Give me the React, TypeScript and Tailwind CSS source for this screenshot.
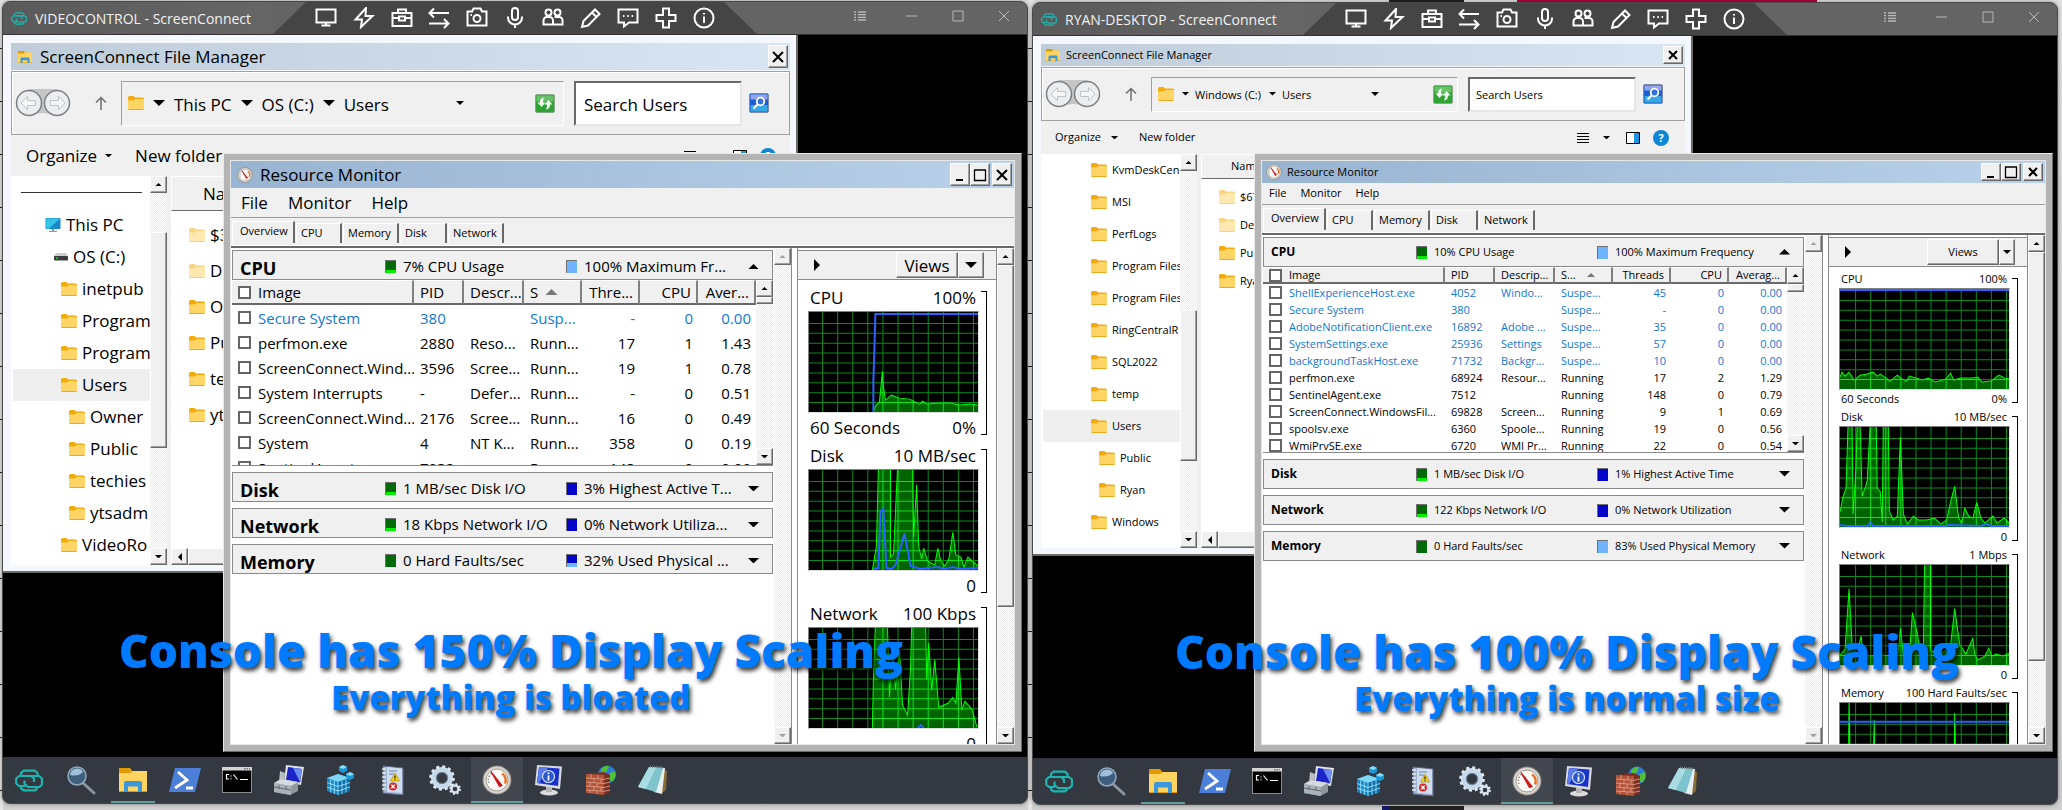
import React, { useId } from "react";

type Size = "lg" | "sm";
type Pt = [number, number];

/* ---------- small drawings ---------- */

function Logo({ className }: { className: string }) {
  return (
    <svg viewBox="0 0 28 22" className={className} fill="none" stroke="#1cb5b0" strokeWidth="2.200" strokeLinejoin="round">
      <path d="M6 6V3.500L8.500 1.200H20L22.500 3.500V6" />
      <path d="M9.500 6.500H24L27 9V15L24.500 17.500H13L9.500 14.500V11" />
      <path d="M19 12.500V9L16 6.500H4L1.200 9V14L4 16.500H10" />
      <path d="M6 16.500V19L8.500 20.900H20L22.500 18.500" />
    </svg>
  );
}

function Folder({ pale }: { pale?: boolean }) {
  return (
    <svg viewBox="0 0 16 14" className={pale ? "h-[14px] w-4 shrink-0 opacity-50" : "h-[14px] w-4 shrink-0"}>
      <path d="M0 1.500Q0 0 1.500 0H5.500L7 1.500H14.500Q16 1.500 16 3V6H0z" fill="#f2ab0c" />
      <path d="M0 4.500H5.500L7.500 3H15Q16 3 16 4V12.500Q16 14 14.500 14H1.500Q0 14 0 12.500z" fill="#ffd566" />
      <path d="M0 12.300Q0 14 1.500 14H14.500Q16 14 16 12.300V13H0z" fill="#e9a91a" />
    </svg>
  );
}

function Explorer({ className }: { className: string }) {
  return (
    <svg viewBox="0 0 28 24" className={className}>
      <path d="M0 0H11L14 3.500H28V24H0z" fill="#e29a00" />
      <path d="M0 5H11L14 3H28V23H0z" fill="#ffd55f" />
      <path d="M5 24V15Q5 13 7 13H21Q23 13 23 15V24H19V18.500H9V24z" fill="#3b96da" />
    </svg>
  );
}

function Pc() {
  return (
    <svg viewBox="0 0 16 16" className="size-4 shrink-0">
      <rect x="0.500" y="1" width="15" height="11" rx="1" fill="#1b88c8" />
      <path d="M1 1.500H15L4 11.500H1z" fill="#35c3e8" />
      <path d="M7 12h2v2h3v1H4v-1h3z" fill="#8d99a3" />
    </svg>
  );
}

function Drive() {
  return (
    <svg viewBox="0 0 14 8" className="h-2 w-[14px] shrink-0">
      <path d="M2 0H12L14 3H0z" fill="#c9ccd0" />
      <rect y="3" width="14" height="4.500" rx="0.800" fill="#3a3d40" />
      <rect x="2" y="4.500" width="1.500" height="1.500" fill="#38e04a" />
    </svg>
  );
}

function Gauge({ className }: { className: string }) {
  return (
    <svg viewBox="0 0 30 30" className={className}>
      <circle cx="15" cy="15" r="14.500" fill="#8c8781" />
      <circle cx="15" cy="15" r="13.500" fill="#d9d6d0" />
      <circle cx="15" cy="15" r="11" fill="#fbfaf6" stroke="#a09a92" />
      <path d="M7 18a8 8 0 0 1 3-10" fill="none" stroke="#8b8b8b" strokeWidth="1.500" strokeDasharray="1.500 1.500" />
      <path d="M20 8.500a8 8 0 0 1 3 10" fill="none" stroke="#e8722a" strokeWidth="2.500" />
      <path d="M9 6.500L20 20.500L17.500 21.500z" fill="#c81a1a" stroke="#c81a1a" strokeWidth="1.200" />
    </svg>
  );
}

function Tri({ dir = "down", className = "w-[7px]", color = "#000" }: { dir?: "down" | "up" | "right" | "left"; className?: string; color?: string }) {
  const side = dir === "right" || dir === "left";
  const d = { down: "M0 0H8L4 4z", up: "M0 4H8L4 0z", right: "M0 0V8L4 4z", left: "M4 0V8L0 4z" }[dir];
  return (
    <svg viewBox={side ? "0 0 4 8" : "0 0 8 4"} className={"shrink-0 " + className} fill={color}>
      <path d={d} />
    </svg>
  );
}

const toolIcons: { name: string; art: React.ReactNode }[] = [
  { name: "Display", art: <path d="M1.500 2.500h19v13h-19zM11 15.500v3M6.500 18.500h9" /> },
  { name: "Power", art: <path d="M13 1L2.500 12.500H9L8 20L19.500 9H12.500z" /> },
  { name: "Toolbox", art: <path d="M1.500 6h19v13h-19zM7 6V2.500h8V6M1.500 11H8m6 0h6.500M8 9.500h6v4H8z" /> },
  { name: "Transfer", art: <path d="M21 6H1.500M6 1.500L1.500 6L6 10.500M1 16.500h19.500M16 12l4.500 4.500L16 21" /> },
  {
    name: "Capture",
    art: (
      <>
        <path d="M1.500 4.500h4.500l1.500-3h7l1.500 3h4.500v14h-19z" />
        <circle cx="11" cy="11.500" r="3.500" />
        <path d="M4.500 8h1.500" />
      </>
    ),
  },
  {
    name: "Voice",
    art: (
      <>
        <rect x="8" y="1" width="6" height="12" rx="3" />
        <path d="M4 9.500v1a7 7 0 0 0 14 0v-1M11 17.500V21" />
      </>
    ),
  },
  {
    name: "Guests",
    art: (
      <>
        <circle cx="6.500" cy="5.500" r="3" />
        <circle cx="15.500" cy="5.500" r="3" />
        <path d="M1.500 17.500v-4a3.500 3.500 0 0 1 3.500-3.500h2.500a3.500 3.500 0 0 1 3.500 3.500v4zM12.500 10h4a3.500 3.500 0 0 1 4 3.500v4H11" />
      </>
    ),
  },
  { name: "Annotate", art: <path d="M2 20l1.500-6L15 2.500l4.500 4.500L8 18.500zM12 5.500l4.500 4.500" /> },
  { name: "Chat", art: <path d="M1.500 2.500h19v13H12l-5 4v-4H1.500zM6 9h1.500M10.300 9h1.500M14.600 9h1.500" /> },
  { name: "Extras", art: <path d="M8 1.500h6V8h6.500v6H14v6.500H8V14H1.500V8H8z" /> },
  {
    name: "Info",
    art: (
      <>
        <circle cx="11" cy="11" r="9.500" />
        <path d="M11 9.500V16M11 6v1.500" />
      </>
    ),
  },
];

/* ---------- task bar drawings ---------- */

const taskIcons: { name: string; art: React.ReactNode }[] = [
  { name: "ScreenConnect", art: <Logo className="h-[23px] w-7" /> },
  {
    name: "Search",
    art: (
      <svg viewBox="0 0 30 30" className="size-[30px]">
        <path d="M17 18L28 28" stroke="#8b95a0" strokeWidth="3" strokeLinecap="round" />
        <circle cx="11" cy="11" r="9" fill="#3e5f7e" stroke="#93a9bb" strokeWidth="1.500" />
        <path d="M4 10a7 7 0 0 1 13-3q-5 5-13 3" fill="#9fc0d8" />
      </svg>
    ),
  },
  { name: "File Explorer", art: <Explorer className="h-6 w-7" /> },
  {
    name: "PowerShell",
    art: (
      <svg viewBox="0 0 32 24" className="h-6 w-8">
        <path d="M6 0H32L26 24H0z" fill="#4b7fd8" />
        <path d="M9 4L18 12L6 20M17 20h7" fill="none" stroke="#fff" strokeWidth="2.800" />
      </svg>
    ),
  },
  {
    name: "Command Prompt",
    art: (
      <svg viewBox="0 0 30 26" className="h-[26px] w-[30px]">
        <rect x="0.500" y="0.500" width="29" height="25" fill="#000" stroke="#8a8a8a" />
        <path d="M0 0H30V3.500H0z" fill="#d4d4d4" />
        <path d="M22 1.800h6" stroke="#446" strokeDasharray="1.500 1" />
        <path d="M7 7.500H4.500V12H7M9 8.500v1M9 11.200v1M11.500 7.500L15.500 12.500M18 12.500h8" fill="none" stroke="#fff" strokeWidth="1.200" />
      </svg>
    ),
  },
  {
    name: "Computer Management",
    art: (
      <svg viewBox="0 0 32 32" className="size-8">
        <path d="M13 1L31 3L28 21L11 18z" fill="#dfe1e4" />
        <path d="M15 3L29 5L27 18.500L13 16z" fill="#1a24c8" />
        <path d="M20 4L29 5L27 18z" fill="#6d8df0" />
        <path d="M7 7l5 2-1 11-5-2z" fill="#b9bec4" />
        <path d="M1 19L8 15L25 18V27L17 31L1 28z" fill="#8f989f" />
        <path d="M1 19L8 15L25 18L18 22z" fill="#d5dade" />
        <path d="M1 19L18 22V31L1 28z" fill="#a9b2b8" />
        <path d="M1 23l17 3M6 21v4M13 22v4" stroke="#5e686f" />
      </svg>
    ),
  },
  {
    name: "Registry Editor",
    art: (
      <svg viewBox="0 0 30 32" className="h-8 w-[30px]">
        <path d="M1 14L12 10L24 14V27L12 31L1 27z" fill="#1787c4" />
        <path d="M1 14L12 10L24 14L12 18z" fill="#7fd6f7" />
        <path d="M12 18L24 14V27L12 31z" fill="#0d6ba6" />
        <path d="M1 18.500l11 4 12-4M1 23l11 4 12-4M4.700 15.500v13M8.300 17v13M16 17v13M20 15.500v13M12 18v13" stroke="#9be0fa" strokeWidth="0.900" fill="none" />
        <path d="M13 3l4-2 4 2v4l-4 2-4-2zM20 10l4-2 4 2v4l-4 2-4-2z" fill="#1b98d6" />
        <path d="M13 3l4-2 4 2-4 2zM20 10l4-2 4 2-4 2z" fill="#8adcf9" />
      </svg>
    ),
  },
  {
    name: "Event Viewer",
    art: (
      <svg viewBox="0 0 24 30" className="h-[30px] w-6">
        <path d="M2 1L22 3V30L2 28z" fill="#9fb2cf" stroke="#5d6c86" />
        <path d="M6 2L21 3.500V28L6 27z" fill="#cfdcf0" />
        <path d="M1 4h4M1 8h4M1 12h4M1 16h4M1 20h4M1 24h4" stroke="#e8e8e8" strokeWidth="1.500" />
        <path d="M8 6h8M8 9h5" stroke="#6b83b5" />
        <path d="M14 8L18.500 16H9.500z" fill="#f7d417" stroke="#a58a00" strokeWidth="0.600" />
        <path d="M14 10.500v3M14 14.200v1" stroke="#222" strokeWidth="1.200" />
        <circle cx="12" cy="21.500" r="4" fill="#d42a2a" />
        <path d="M10.300 19.800l3.400 3.400M13.700 19.800l-3.400 3.400" stroke="#fff" strokeWidth="1.300" />
      </svg>
    ),
  },
  {
    name: "Services",
    art: (
      <svg viewBox="0 0 32 30" className="h-[30px] w-8" fill="none">
        <circle cx="13" cy="13" r="8.500" stroke="#c5d9ea" strokeWidth="5" />
        <circle cx="13" cy="13" r="11.300" stroke="#dbe8f3" strokeWidth="3" strokeDasharray="3 2.900" />
        <circle cx="13" cy="13" r="5.500" stroke="#7896b0" strokeWidth="0.800" />
        <circle cx="26" cy="24" r="3.500" stroke="#d5e3ef" strokeWidth="2.400" />
        <circle cx="26" cy="24" r="5" stroke="#e3edf6" strokeWidth="1.800" strokeDasharray="2 1.900" />
      </svg>
    ),
  },
  { name: "Resource Monitor", art: <Gauge className="size-[30px]" /> },
  {
    name: "System Information",
    art: (
      <svg viewBox="0 0 30 32" className="h-8 w-[30px]">
        <ellipse cx="15" cy="28.500" rx="9" ry="3" fill="#dcdcdc" />
        <path d="M12 20l6 1v7h-6z" fill="#b5b5b5" />
        <path d="M3 1L28 2.500L26 25L1 21z" fill="#d8dadd" />
        <path d="M5 3L25.500 4.500L24 22L3 19z" fill="#1b32c9" />
        <path d="M5 3L14 3.700L5 19.300H3z" fill="#5b7bea" />
        <circle cx="14.500" cy="12.500" r="6" fill="#2a57c8" stroke="#cfe0ff" strokeWidth="1.200" />
        <path d="M14.500 11.500v5M14.500 8.500v1.800" stroke="#fff" strokeWidth="1.800" />
      </svg>
    ),
  },
  {
    name: "Firewall",
    art: (
      <svg viewBox="0 0 32 32" className="size-8">
        <circle cx="22" cy="10.500" r="9" fill="#2f7ad6" />
        <path d="M16 5q4-4 8-3l-2 5-5 3zM25 9l5-2q2 6-3 11l-3-3z" fill="#4dc236" />
        <path d="M1 10L19 8L25 11V28L19 31L1 29z" fill="#7c2f20" />
        <path d="M1 10L19 11V31L1 29z" fill="#b35339" />
        <path d="M1 14l18 1.300 6-1.300M1 18l18 1.500 6-1.500M1 22l18 1.500 6-1.500M1 26l18 1.300 6-1.300M6 10v4M13 11v4M9 14.500v4M16 15v4M5 18v4M12 19v4M9 22.500v4M16 23v4M5 26v3M12 27v3" stroke="#e0a790" strokeWidth="0.800" fill="none" />
      </svg>
    ),
  },
  {
    name: "Notepad",
    art: (
      <svg viewBox="0 0 30 30" className="size-[30px]">
        <path d="M25 4l4 2-1 19-5 4z" fill="#8a6a35" />
        <path d="M12 2L27 3L24 29L16 27z" fill="#e6eef0" />
        <path d="M11 2L25 3L18 27L0 22z" fill="#7fc3cd" />
        <path d="M11 2L18 2.500L8 24L0 22z" fill="#a9dde3" />
        <path d="M12 1.500l14 1" stroke="#6c7b80" strokeWidth="2" strokeDasharray="1 1" />
      </svg>
    ),
  },
];

/* ---------- classic controls ---------- */

const raised = "border border-white border-r-[#696969] border-b-[#696969] bg-[#f0f0f0] shadow-[inset_-1px_-1px_0_#a0a0a0]";
const track =
  "bg-[#fff] bg-[repeating-conic-gradient(#ececec_0_25%,#fff_0_50%)] bg-[length:2px_2px]";

function ScrollBar({ thumb, muted }: { thumb: string; muted?: boolean }) {
  const color = muted ? "#a0a0a0" : "#000";
  return (
    <div className={"flex w-[17px] shrink-0 flex-col " + track}>
      <button aria-label="Scroll up" className={"grid h-[17px] shrink-0 place-items-center " + raised}>
        <Tri dir="up" color={color} />
      </button>
      <div className="min-h-0 flex-1 overflow-hidden">{thumb && <div className={raised + " " + thumb} />}</div>
      <button aria-label="Scroll down" className={"grid h-[17px] shrink-0 place-items-center " + raised}>
        <Tri color={color} />
      </button>
    </div>
  );
}

function CaptionButton({ kind, size }: { kind: "Minimize" | "Maximize" | "Close"; size: Size }) {
  return (
    <button
      aria-label={kind}
      className={"grid w-5 place-items-center " + (size === "lg" ? "h-[23px] " : "h-[18px] ") + raised}
    >
      <svg viewBox="0 0 14 14" className="size-[14px]" fill="none" stroke="#000" strokeWidth="2">
        {kind === "Minimize" && <path d="M3 12h7" />}
        {kind === "Maximize" && <path d="M1 2h12M1.500 2v10.500h11V2" strokeWidth="1.300" />}
        {kind === "Close" && <path d={size === "lg" ? "M2 2l10 10M12 2L2 12" : "M3 3l8 8M11 3l-8 8"} />}
      </svg>
    </button>
  );
}

/* ---------- file manager ---------- */

type Node = { label: string; pad: string; icon?: "pc" | "drive"; active?: boolean };
type Entry = { label: string; pale?: boolean };
type Files = { crumbs: string[]; tree: Node[]; entries: Entry[] };

function FileManager({ size, data }: { size: Size; data: Files }) {
  const lg = size === "lg";
  const searchId = useId();
  const text = lg ? "text-[17px]" : "text-[11px]";
  return (
    <section
      className={
        "absolute top-0 left-0 flex flex-col border-r-2 border-b-2 border-[#6b6b6b] bg-[#f4f8fd] pt-2 pr-[6px] pb-[6px] pl-2 " +
        text +
        (lg ? " h-[538px] w-[795px]" : " h-[520px] w-[660px]")
      }
    >
      <header
        className={
          "flex shrink-0 items-center bg-linear-to-r from-[#bfcddb] to-[#d8e5f3] pr-[2px] " +
          (lg ? "h-[27px] gap-2 pl-[7px]" : "h-[22px] gap-[6px] pl-[5px]")
        }
      >
        <Explorer className="h-3 w-[14px]" />
        <h2 className="flex-1">ScreenConnect File Manager</h2>
        <CaptionButton kind="Close" size={size} />
      </header>
      <div
        className={
          "mt-px flex shrink-0 items-center border border-[#a0a0a0] bg-[#f0f0f0] pl-[3px] shadow-[inset_1px_1px_0_#fff] " +
          (lg ? "h-16 pr-5" : "h-[54px] pr-[21px]")
        }
      >
        <svg viewBox="0 0 56 28" className="h-7 w-14 shrink-0">
          <path d="M14 0H42L50 14L42 27Q28 21 14 27L6 14z" fill="#c6c6c6" />
          <circle cx="14" cy="14" r="12.500" fill="#ebedef" stroke="#7c8084" strokeWidth="1.500" />
          <circle cx="42" cy="14" r="12.500" fill="#ebedef" stroke="#7c8084" strokeWidth="1.500" />
          <path d="M6 14l6.500-6.500v4h8v5h-8v4zM50 14l-6.500-6.500v4h-8v5h8v4z" fill="#f6f7f8" stroke="#bfc3c7" />
        </svg>
        <svg viewBox="0 0 12 14" className="ml-[24px] h-[14px] w-3 shrink-0" fill="none" stroke="#6f6f6f" strokeWidth="1.500">
          <path d="M6 14V1.500M1 6.500L6 1.500l5 5" />
        </svg>
        <div
          className={
            "ml-[14px] flex min-w-0 flex-1 items-center border border-white border-t-[#a0a0a0] border-l-[#a0a0a0] pl-[6px] " +
            (lg ? "h-[45px] gap-[9px] pr-2" : "h-[35px] gap-[6px] pr-[4px]")
          }
        >
          <Folder />
          {data.crumbs.map((c) => (
            <React.Fragment key={c}>
              <Tri className={lg ? "w-3" : "ml-[2px] w-[7px]"} />
              <a href="#" className={"whitespace-nowrap " + (lg ? "pt-[3px]" : "pt-[2px]")}>
                {c}
              </a>
            </React.Fragment>
          ))}
          <button aria-label="Recent locations" className={lg ? "mr-[62px] ml-auto" : "mr-[48px] ml-auto"}>
            <Tri className="w-2" />
          </button>
          <button aria-label="Refresh">
            <svg viewBox="0 0 20 19" className="h-[19px] w-5">
              <rect x="0.500" y="0.500" width="19" height="18" rx="1.500" fill="#2fa233" stroke="#8aa88b" />
              <rect x="1.500" y="1.500" width="17" height="6" fill="#7fcf7c" opacity="0.700" />
              <path d="M9 3.500Q5 4 5 8.500H2.500l4 4.500 4-4.500H8q0-3 1-5zM11 15.500q4-0.500 4-5h2.500l-4-4.500-4 4.500H12q0 3-1 5z" fill="#f2fff2" />
            </svg>
          </button>
        </div>
        <label htmlFor={searchId} className="sr-only">
          Search
        </label>
        <input
          id={searchId}
          defaultValue="Search Users"
          className={
            "ml-[10px] w-[168px] shrink-0 border-2 border-[#e6e6e6] border-t-[#696969] border-l-[#696969] bg-white outline-none " +
            (lg ? "h-[45px] pt-[2px] pl-2" : "h-[35px] pl-[6px]")
          }
        />
        <button aria-label="Go" className="ml-[7px]">
          <svg viewBox="0 0 20 20" className="size-5">
            <rect x="0.500" y="0.500" width="19" height="19" rx="1.500" fill="#1d5fd0" stroke="#7b8aa5" />
            <rect x="1.500" y="1.500" width="17" height="5" fill="#93a4f0" />
            <rect x="1.500" y="12" width="17" height="6.500" fill="#35a8e6" />
            <circle cx="11.500" cy="8.500" r="3.800" fill="#3070e0" stroke="#fff" strokeWidth="1.800" />
            <path d="M8.500 11.500L4.500 15.500" stroke="#fff" strokeWidth="2.200" />
          </svg>
        </button>
      </div>
      <div className={"flex shrink-0 items-center bg-[#f0f0f0] " + (lg ? "h-[41px] pr-[14px] pl-[15px]" : "h-[33px] pr-4 pl-[14px]")}>
        <button className={"flex items-center " + (lg ? "gap-2" : "gap-[10px]")}>
          Organize <Tri />
        </button>
        <button className={lg ? "ml-[23px]" : "ml-[21px]"}>New folder</button>
        <button aria-label="View" className="ml-auto flex items-center gap-[14px]">
          <svg viewBox="0 0 12 12" className="size-3" stroke="#000">
            <path d="M0 1.500h12M0 4.500h12M0 7.500h12M0 10.500h12" />
          </svg>
          <Tri />
        </button>
        <button aria-label="Preview pane" className="ml-4">
          <svg viewBox="0 0 14 12" className="h-3 w-[14px]">
            <path d="M0.500 0.500h13v11h-13z" fill="#fff" stroke="#000" />
            <path d="M8 1h5v10H8z" fill="#1c96e0" />
          </svg>
        </button>
        <button aria-label="Help" className="ml-[13px] grid size-4 place-items-center rounded-full bg-[#0f86d6] text-[11px] font-bold text-white">
          ?
        </button>
      </div>
      <div className="flex min-h-0 flex-1 gap-1 bg-[#f0f0f0]">
        <nav className="flex w-[156px] shrink-0 bg-white">
          <ul className="min-w-0 flex-1 overflow-hidden whitespace-nowrap">
            {lg && (
              <li aria-hidden className="h-[33px] pt-4 pr-2 pl-[10px]">
                <div className="border-t border-[#333]" />
              </li>
            )}
            {data.tree.map((n, i) => (
              <li key={i} className="pl-[2px]">
                <button className={"flex h-8 w-full items-center gap-[5px] " + n.pad + (n.active ? " bg-[#efefef]" : "")}>
                  {n.icon === "pc" ? <Pc /> : n.icon === "drive" ? <Drive /> : <Folder />}
                  {n.label}
                </button>
              </li>
            ))}
          </ul>
          <ScrollBar thumb={lg ? "mt-[39px] h-[216px]" : "mt-[139px] h-[151px]"} />
        </nav>
        <div className="flex min-w-0 flex-1 flex-col bg-white">
          <div
            className={
              "flex shrink-0 items-center border-t border-b border-l border-white border-b-[#696969] bg-[#f0f0f0] " +
              (lg ? "h-[35px] pl-[31px]" : "h-[25px] pl-[29px]")
            }
          >
            Name
          </div>
          <ul className={"flex-1 pl-[18px] " + (lg ? "pt-[6px]" : "pt-[4px]")}>
            {data.entries.map((e) => (
              <li key={e.label} className={"flex items-center gap-[5px] " + (lg ? "h-9" : "h-7")}>
                <Folder pale={e.pale} />
                {e.label}
              </li>
            ))}
          </ul>
          <div className={"flex h-[17px] " + track}>
            <button aria-label="Scroll left" className={"grid w-[17px] place-items-center " + raised}>
              <Tri dir="left" className="w-[4px]" />
            </button>
            <div className={"flex-1 " + raised} />
          </div>
        </div>
      </div>
    </section>
  );
}

/* ---------- resource monitor ---------- */

type Series = { name: string; max: string; min: string; span?: string; green: Pt[]; blue?: Pt[] };

function Graph({ green, blue, big }: { green: Pt[]; blue?: Pt[]; big: boolean }) {
  const clip = useId();
  const area = "M" + green[0][0] + " 101L" + green.map((p) => p.join(" ")).join("L") + "L" + green[green.length - 1][0] + " 101z";
  const first = big ? 13 : 15;
  let grid = "";
  for (let x = first; x < 168; x += 15) grid += "M" + x + ".500 0V101";
  for (let y = 11; y < 101; y += 10) grid += "M0 " + y + ".500H168";
  return (
    <svg
      viewBox="0 0 168 101"
      preserveAspectRatio="none"
      className="h-[102px] w-full border border-[#e0e0e0] border-t-[#808080] border-l-[#808080] bg-black"
      fill="none"
    >
      <defs>
        <clipPath id={clip}>
          <path d={area} />
        </clipPath>
      </defs>
      <path d={grid} stroke="#0a8a1c" />
      <path d={area} fill="#006400" />
      <path d={grid} stroke="#0ee022" clipPath={`url(#${clip})`} />
      <path d={"M" + green.map((p) => p.join(" ")).join("L")} stroke="#00ff00" />
      {blue && <path d={"M" + blue.map((p) => p.join(" ")).join("L")} stroke="#2a62ff" strokeWidth="2" />}
    </svg>
  );
}

function Meter({ green, blue, level }: { green?: boolean; blue?: boolean; level: "full" | "low" | "part" | "none" }) {
  const base = green ? "bg-[#006a08]" : blue ? "bg-[#0404c8]" : "bg-[#70b4ff]";
  const fill = green ? "bg-[#00f000]" : "bg-[#70b4ff]";
  const height = { full: "h-full", low: "h-[3px]", part: "h-[4px]", none: "h-0" }[level];
  return (
    <span className={"flex h-[13px] w-[11px] shrink-0 flex-col justify-end border-t border-l border-[#707070] " + base}>
      <span className={"block " + height + " " + fill} />
    </span>
  );
}

type Section = { name: string; left: string; leftLow: boolean; right: string; rightLevel: "full" | "part" | "none" };

function SectionHeader({ s, open, lg }: { s: Section; open?: boolean; lg: boolean }) {
  return (
    <div
      className={
        "grid h-[30px] shrink-0 grid-cols-[152px_181px_minmax(0,1fr)_auto] items-center border border-[#8a8a8a] bg-[#f0f0f0] pr-[13px] whitespace-nowrap " +
        (lg ? "text-[15px]" : "text-[11px]")
      }
    >
      <h3 className={"pl-[7px] font-bold " + (lg ? "pt-1 text-[18px]" : "text-[12px]")}>{s.name}</h3>
      <span className="flex items-center gap-[7px]">
        <Meter green level={s.leftLow ? "low" : "none"} />
        {s.left}
      </span>
      <span className="flex items-center gap-[7px]">
        <Meter blue level={s.rightLevel} />
        {s.right}
      </span>
      <button aria-label={"Toggle " + s.name}>
        <Tri dir={open ? "up" : "down"} className="w-[11px]" />
      </button>
    </div>
  );
}

type Monitor = { columns: string[]; rows: string[][]; sections: Section[]; series: Series[] };

function ResourceMonitor({ size, data }: { size: Size; data: Monitor }) {
  const lg = size === "lg";
  const text = lg ? "text-[17px]" : "text-[11px]";
  const tabs: [string, string][] = [
    ["Overview", "w-[63px]"],
    ["CPU", "w-[46px]"],
    ["Memory", "w-[56px]"],
    ["Disk", "w-[47px]"],
    ["Network", "w-[56px]"],
  ];
  const align = (i: number) => (i > 3 ? " pr-[5px] text-right" : " pl-[6px] text-left");
  return (
    <section
      className={
        "absolute flex flex-col border border-[#e8e8e8] border-r-[#6b6b6b] border-b-[#6b6b6b] bg-[#b4b4b4] p-[6px] " +
        (lg ? "top-[118px] right-[5px] bottom-[5px] left-[220px] " : "top-[117px] right-1 bottom-[6px] left-[221px] ") +
        text
      }
    >
      <div className="flex min-h-0 flex-1 flex-col border border-[#e8e8e8] bg-[#f0f0f0]">
        <header
          className={
            "flex shrink-0 items-center bg-linear-to-r from-[#99b4d1] to-[#b9d1ea] pr-[2px] " +
            (lg ? "h-[27px] gap-[7px] pl-[6px]" : "h-[22px] gap-[5px] pl-[4px]")
          }
        >
          <Gauge className="size-4" />
          <h2 className="flex-1">Resource Monitor</h2>
          <div className="flex">
            <CaptionButton kind="Minimize" size={size} />
            <CaptionButton kind="Maximize" size={size} />
            <div className="w-[2px]" />
            <CaptionButton kind="Close" size={size} />
          </div>
        </header>
        <nav className={"flex shrink-0 items-center border-b border-[#a0a0a0] " + (lg ? "h-[30px] gap-5 pl-[10px]" : "h-[22px] gap-[14px] pl-[7px]")}>
          <button>File</button>
          <button>Monitor</button>
          <button>Help</button>
        </nav>
        <div role="tablist" className="flex h-[27px] shrink-0 items-end gap-px pb-[2px] pl-px text-[11px]">
          {tabs.map(([t, w], i) => (
            <button
              key={t}
              role="tab"
              aria-selected={i === 0}
              className={
                "border-t border-r-2 border-l border-white border-r-[#696969] text-left " +
                w +
                (i === 0 ? " h-[22px] pb-[2px] pl-[7px]" : " h-5 pl-1")
              }
            >
              {t}
            </button>
          ))}
        </div>
        <div className="h-[3px] shrink-0 border-b-2 border-[#696969] bg-white" />
        <div className="flex min-h-0 flex-1 bg-white">
          <div className="flex min-w-0 flex-1 flex-col gap-[6px] overflow-hidden pt-[2px] pr-[1px] pl-px">
            <div className="flex h-[216px] shrink-0 flex-col border-b border-[#8a8a8a]">
              <SectionHeader s={data.sections[0]} open lg={lg} />
              <div className="flex min-h-0 flex-1">
                <div className="min-w-0 flex-1 overflow-hidden">
                  <table
                    className={
                      "w-full table-fixed border-separate border-spacing-0 whitespace-nowrap " +
                      (lg ? "text-[15px] leading-[20px]" : "text-[11px] leading-[14px]")
                    }
                  >
                    <colgroup>
                      <col />
                      <col className="w-[50px]" />
                      <col className="w-[60px]" />
                      <col className="w-[58px]" />
                      <col className="w-[58px]" />
                      <col className="w-[58px]" />
                      <col className="w-[58px]" />
                    </colgroup>
                    <thead>
                      <tr className={lg ? "h-[25px]" : "h-[17px]"}>
                        {data.columns.map((c, i) => (
                          <th
                            key={c}
                            className={
                              "overflow-hidden border-t border-r-2 border-b-2 border-white border-r-[#808080] border-b-[#696969] bg-[#f0f0f0] p-0 font-normal" +
                              align(i)
                            }
                          >
                            <span className={"flex items-center gap-[7px]" + (i > 3 ? " justify-end" : "")}>
                              {i === 0 && (
                                <input
                                  type="checkbox"
                                  aria-label="Select all"
                                  className="size-[13px] shrink-0 appearance-none border-2 border-[#666] bg-white"
                                />
                              )}
                              {c}
                              {i === 3 && <Tri dir="up" className={lg ? "w-[13px]" : "ml-1 w-2"} color="#777" />}
                            </span>
                          </th>
                        ))}
                      </tr>
                    </thead>
                    <tbody>
                      {data.rows.map((r, n) => (
                        <tr key={n} className={(lg ? "h-[25px]" : "h-[17px]") + (r[3].startsWith("Sus") ? " text-[#0f78d4]" : "")}>
                          {r.map((c, i) => (
                            <td key={i} className={"overflow-hidden p-0" + align(i)}>
                              {i === 0 ? (
                                <label className="flex items-center gap-[7px]">
                                  <input type="checkbox" className="size-[13px] shrink-0 appearance-none border-2 border-[#666] bg-white" />
                                  {c}
                                </label>
                              ) : (
                                c
                              )}
                            </td>
                          ))}
                        </tr>
                      ))}
                    </tbody>
                  </table>
                </div>
                <ScrollBar thumb={lg ? "h-[7px]" : "h-2"} />
              </div>
            </div>
            {data.sections.slice(1).map((s) => (
              <SectionHeader key={s.name} s={s} lg={lg} />
            ))}
          </div>
          <ScrollBar thumb="" muted />
          <div className="w-[6px] shrink-0 border-l border-[#8a8a8a]" />
          <div className="flex w-[200px] shrink-0 flex-col overflow-hidden border-r border-l border-[#8a8a8a] pt-[2px]">
            <div className="flex h-[30px] shrink-0 items-center border-t border-b border-[#8a8a8a] bg-[#f0f0f0] pr-3 pl-4">
              <button aria-label="Collapse graphs">
                <Tri dir="right" className="w-[6px]" />
              </button>
              <button className={"ml-auto h-[26px] " + (lg ? "w-[62px] " : "w-[72px] ") + raised}>Views</button>
              <button aria-label="View options" className={"grid h-[26px] place-items-center " + (lg ? "w-[26px] " : "w-4 ") + raised}>
                <Tri className={lg ? "w-3" : "w-2"} />
              </button>
            </div>
            <div className={lg ? "pt-[5px]" : "pt-[3px]"}>
              {data.series.map((g) => (
                <figure key={g.name} className="flex gap-[2px] pr-[9px] pl-[10px]">
                  <div className="min-w-0 flex-1">
                    <figcaption
                      className={"flex items-center justify-between pr-[3px] pl-[2px] whitespace-nowrap " + (lg ? "h-[26px]" : "h-[18px]")}
                    >
                      <span>{g.name}</span>
                      <span>{g.max}</span>
                    </figcaption>
                    <Graph green={g.green} blue={g.blue} big={lg} />
                    <div className={"flex items-center justify-between pr-[3px] pl-[2px] " + (lg ? "h-[30px]" : "h-[18px]")}>
                      <span>{g.span}</span>
                      <span>{g.min}</span>
                    </div>
                  </div>
                  <div
                    className={
                      "w-[6px] shrink-0 border-t border-r border-b border-black " + (lg ? "mt-[6px] h-[144px]" : "mt-[8px] h-[125px]")
                    }
                  />
                </figure>
              ))}
            </div>
          </div>
          <ScrollBar thumb={lg ? "h-[342px]" : "h-[409px]"} />
        </div>
      </div>
    </section>
  );
}

/* ---------- remote session window ---------- */

function RemoteWindow(props: {
  size: Size;
  title: string;
  className: string;
  files: Files;
  monitor: Monitor;
  headline: string;
  subline: string;
  captionPad: string;
}) {
  return (
    <main
      className={
        "relative flex min-w-0 flex-col overflow-hidden rounded-lg border border-[#4a4a4a] bg-[#646464] shadow-[0_0_4px_rgba(0,0,0,0.4)] " +
        props.className
      }
    >
      <header className="flex h-[33px] shrink-0 border-b border-[#333]">
        <div className="flex w-[270px] shrink-0 items-center gap-2 bg-linear-to-r from-[#5a5a5a] to-[#666] pl-2 text-[#f2f2f2]">
          <Logo className="h-[13px] w-4" />
          <h1 className="text-[14px] whitespace-nowrap">{props.title}</h1>
        </div>
        <div className="flex w-[484px] shrink-0 items-center justify-between bg-[#454545] px-[42px] text-white [clip-path:polygon(33px_0,calc(100%-33px)_0,100%_100%,0_100%)]">
          {toolIcons.map((t) => (
            <button key={t.name} aria-label={t.name}>
              <svg viewBox="0 0 22 22" className="size-[22px]" fill="none" stroke="currentColor" strokeWidth="2">
                {t.art}
              </svg>
            </button>
          ))}
        </div>
        <div className="flex flex-1 items-center justify-end gap-[34px] pr-[17px] pb-1 text-[#b8b8b8]">
          <button aria-label="Menu" className="mr-[6px]">
            <svg viewBox="0 0 12 10" className="h-[10px] w-3" stroke="currentColor" strokeWidth="1.300">
              <path d="M0 1h2M0 3.700h2M0 6.300h2M0 9h2M4 1h8M4 3.700h8M4 6.300h8M4 9h8" />
            </svg>
          </button>
          {["M0 6h11", "M1 1h10v10H1z", "M1 1l10 10M11 1L1 11"].map((d) => (
            <button key={d} aria-label="Window control">
              <svg viewBox="0 0 12 12" className="size-3" fill="none" stroke="currentColor">
                <path d={d} />
              </svg>
            </button>
          ))}
        </div>
      </header>
      <div className="relative min-h-0 flex-1 overflow-hidden bg-black">
        <FileManager size={props.size} data={props.files} />
        <ResourceMonitor size={props.size} data={props.monitor} />
        <div
          className={
            "pointer-events-none absolute inset-x-0 bottom-[38px] text-center font-extrabold whitespace-nowrap text-[#007bff] [text-shadow:2px_3px_4px_rgba(0,0,0,0.75)] " +
            props.captionPad
          }
        >
          <p className="text-[46px] leading-[54px]">{props.headline}</p>
          <p className="text-[33px] leading-[42px]">{props.subline}</p>
        </div>
      </div>
      <footer className="flex h-[46px] shrink-0 bg-[#343841]">
        {taskIcons.map((t) => (
          <button
            key={t.name}
            aria-label={t.name}
            className={
              "grid w-[52px] place-items-center " +
              (t.name === "Resource Monitor"
                ? "border-t-2 border-b-2 border-t-[#42474f] border-b-[#5f9ea0] bg-[#42474f]"
                : t.name === "File Explorer"
                  ? "bg-linear-to-t from-[#5f9ea0] to-[#5f9ea0] bg-[length:44px_2px] bg-bottom bg-no-repeat"
                  : "")
            }
          >
            {t.art}
          </button>
        ))}
      </footer>
    </main>
  );
}

/* ---------- data ---------- */

const leftFiles: Files = {
  crumbs: ["This PC", "OS (C:)", "Users"],
  tree: [
    { label: "This PC", pad: "pl-8", icon: "pc" },
    { label: "OS (C:)", pad: "pl-[41px]", icon: "drive" },
    { label: "inetpub", pad: "pl-12" },
    { label: "Program", pad: "pl-12" },
    { label: "Program", pad: "pl-12" },
    { label: "Users", pad: "pl-12", active: true },
    { label: "Owner", pad: "pl-14" },
    { label: "Public", pad: "pl-14" },
    { label: "techies", pad: "pl-14" },
    { label: "ytsadm", pad: "pl-14" },
    { label: "VideoRo", pad: "pl-12" },
  ],
  entries: [
    { label: "$3", pale: true },
    { label: "D", pale: true },
    { label: "O" },
    { label: "Pu" },
    { label: "te" },
    { label: "yt" },
  ],
};

const rightFiles: Files = {
  crumbs: ["Windows (C:)", "Users"],
  tree: [
    { label: "KvmDeskCen", pad: "pl-12" },
    { label: "MSI", pad: "pl-12" },
    { label: "PerfLogs", pad: "pl-12" },
    { label: "Program Files", pad: "pl-12" },
    { label: "Program Files", pad: "pl-12" },
    { label: "RingCentralR", pad: "pl-12" },
    { label: "SQL2022", pad: "pl-12" },
    { label: "temp", pad: "pl-12" },
    { label: "Users", pad: "pl-12", active: true },
    { label: "Public", pad: "pl-14" },
    { label: "Ryan", pad: "pl-14" },
    { label: "Windows", pad: "pl-12" },
  ],
  entries: [{ label: "$67", pale: true }, { label: "De", pale: true }, { label: "Pul" }, { label: "Rya" }],
};

const leftMonitor: Monitor = {
  columns: ["Image", "PID", "Descr...", "S", "Thre...", "CPU", "Aver..."],
  rows: [
    ["Secure System", "380", "", "Susp...", "-", "0", "0.00"],
    ["perfmon.exe", "2880", "Reso...", "Runn...", "17", "1", "1.43"],
    ["ScreenConnect.Wind...", "3596", "Scree...", "Runn...", "19", "1", "0.78"],
    ["System Interrupts", "-", "Defer...", "Runn...", "-", "0", "0.51"],
    ["ScreenConnect.Wind...", "2176", "Scree...", "Runn...", "16", "0", "0.49"],
    ["System", "4", "NT K...", "Runn...", "358", "0", "0.19"],
    ["SentinelAgent.exe", "7032", "", "Runn...", "143", "0", "0.09"],
  ],
  sections: [
    { name: "CPU", left: "7% CPU Usage", leftLow: true, right: "100% Maximum Fr...", rightLevel: "full" },
    { name: "Disk", left: "1 MB/sec Disk I/O", leftLow: true, right: "3% Highest Active T...", rightLevel: "none" },
    { name: "Network", left: "18 Kbps Network I/O", leftLow: true, right: "0% Network Utiliza...", rightLevel: "none" },
    { name: "Memory", left: "0 Hard Faults/sec", leftLow: false, right: "32% Used Physical ...", rightLevel: "part" },
  ],
  series: [
    {
      name: "CPU",
      max: "100%",
      min: "0%",
      span: "60 Seconds",
      green: [[64, 101], [66, 95], [70, 91], [73, 60], [74, 75], [76, 89], [82, 84], [90, 87], [100, 88], [106, 91], [110, 93], [113, 90], [117, 93], [130, 92], [140, 92], [150, 94], [160, 93], [168, 94]],
      blue: [[64, 101], [64, 70], [65, 38], [66, 2], [168, 2]],
    },
    {
      name: "Disk",
      max: "10 MB/sec",
      min: "0",
      green: [[63, 101], [67, 77], [69, -2], [81, -2], [81, 88], [84, 85], [88, -2], [103, -2], [104, 68], [107, 15], [109, 77], [112, 90], [114, 79], [118, 92], [125, 96], [128, 79], [131, 92], [135, 97], [139, 90], [143, 63], [146, 86], [151, 88], [154, 98], [158, 88], [168, 97]],
      blue: [[64, 100], [69, 99], [71, 42], [74, 39], [77, 99], [82, 100], [86, 96], [95, 64], [101, 97], [105, 98], [110, 100], [128, 98], [134, 100], [143, 98], [150, 100], [168, 99]],
    },
    {
      name: "Network",
      max: "100 Kbps",
      min: "0",
      green: [[63, 101], [64, 52], [66, -2], [78, -2], [80, 70], [83, 20], [86, 62], [90, 22], [93, 78], [98, 88], [101, 40], [102, -2], [116, -2], [117, 52], [119, 15], [122, 63], [125, 32], [129, 80], [138, 76], [143, 70], [146, 76], [149, 30], [152, 83], [155, 74], [162, 82], [167, 100]],
      blue: [[108, 101], [111, 98], [114, 101]],
    },
  ],
};

const rightMonitor: Monitor = {
  columns: ["Image", "PID", "Descrip...", "S...", "Threads", "CPU", "Averag..."],
  rows: [
    ["ShellExperienceHost.exe", "4052", "Windo...", "Suspe...", "45", "0", "0.00"],
    ["Secure System", "380", "", "Suspe...", "-", "0", "0.00"],
    ["AdobeNotificationClient.exe", "16892", "Adobe ...", "Suspe...", "35", "0", "0.00"],
    ["SystemSettings.exe", "25936", "Settings", "Suspe...", "57", "0", "0.00"],
    ["backgroundTaskHost.exe", "71732", "Backgr...", "Suspe...", "10", "0", "0.00"],
    ["perfmon.exe", "68924", "Resour...", "Running", "17", "2", "1.29"],
    ["SentinelAgent.exe", "7512", "", "Running", "148", "0", "0.79"],
    ["ScreenConnect.WindowsFil...", "69828", "Screen...", "Running", "9", "1", "0.69"],
    ["spoolsv.exe", "6360", "Spoole...", "Running", "19", "0", "0.56"],
    ["WmiPrvSE.exe", "6720", "WMI Pr...", "Running", "22", "0", "0.54"],
  ],
  sections: [
    { name: "CPU", left: "10% CPU Usage", leftLow: true, right: "100% Maximum Frequency", rightLevel: "full" },
    { name: "Disk", left: "1 MB/sec Disk I/O", leftLow: true, right: "1% Highest Active Time", rightLevel: "none" },
    { name: "Network", left: "122 Kbps Network I/O", leftLow: true, right: "0% Network Utilization", rightLevel: "none" },
    { name: "Memory", left: "0 Hard Faults/sec", leftLow: false, right: "83% Used Physical Memory", rightLevel: "full" },
  ],
  series: [
    {
      name: "CPU",
      max: "100%",
      min: "0%",
      span: "60 Seconds",
      green: [[0, 89], [2, 84], [5, 88], [9, 84], [14, 92], [20, 87], [26, 86], [33, 84], [37, 88], [40, 86], [46, 90], [50, 93], [57, 87], [62, 91], [66, 93], [69, 88], [76, 90], [82, 92], [88, 90], [95, 94], [105, 91], [110, 85], [113, 92], [120, 90], [132, 90], [137, 89], [141, 94], [150, 93], [158, 87], [164, 90], [168, 91]],
      blue: [[0, 1], [168, 1]],
    },
    {
      name: "Disk",
      max: "10 MB/sec",
      min: "0",
      green: [[0, 86], [3, 70], [6, 62], [8, -2], [12, -2], [13, 88], [16, 40], [17, -2], [20, -2], [22, 70], [27, 55], [30, -2], [36, -2], [37, 62], [40, 65], [42, 96], [43, -2], [48, -2], [49, 85], [53, 94], [57, 90], [60, 10], [63, 88], [67, 98], [73, 90], [78, 94], [86, 94], [94, 92], [100, 98], [106, 94], [110, 75], [114, 60], [118, 92], [121, 97], [124, 82], [128, 90], [132, 92], [136, 76], [140, 92], [144, 97], [152, 90], [156, 97], [163, 92], [168, 97]],
      blue: [[0, 99], [8, 100], [28, 100], [30, 96], [33, 100], [106, 100], [109, 99], [140, 100], [145, 98], [150, 100], [168, 100]],
    },
    {
      name: "Network",
      max: "1 Mbps",
      min: "0",
      green: [[0, 91], [5, 85], [9, 24], [12, 80], [16, 92], [21, 72], [23, 90], [30, 92], [40, 91], [55, 92], [58, 88], [60, 64], [63, 90], [69, 92], [72, 48], [77, 70], [80, 90], [83, 80], [84, -2], [90, -2], [90, 86], [100, 91], [110, 80], [114, 44], [119, 80], [125, 90], [132, 74], [134, 90], [137, 96], [144, 92], [148, 84], [151, 92], [155, 90], [162, 92], [168, 89]],
    },
    {
      name: "Memory",
      max: "100 Hard Faults/sec",
      min: "0",
      green: [[8, 101], [9, -2], [11, 101], [32, 101], [34, 17], [35, 101], [113, 101], [114, 10], [116, 101]],
      blue: [[0, 19], [168, 19]],
    },
  ],
};

const ticks = "bg-[repeating-linear-gradient(#e4e4e4_0_52px,#222_52px_53px)] bg-[position:0_-4px]";

export default function App() {
  return (
    <div className="relative flex h-screen overflow-hidden bg-linear-to-b from-[#e2e2e2] via-[#d6d6d6] to-[#d0d0d0] font-['Open_Sans',sans-serif] text-black">
      <div className={"absolute inset-y-0 left-0 w-[3px] " + ticks} />
      <div className="absolute top-0 right-[598px] h-[2px] w-[75px] bg-[#222]" />
      <div className="absolute top-0 right-[245px] h-[2px] w-[300px] bg-[#b0003a]" />
      <div className="absolute right-[598px] bottom-0 h-[4px] w-[75px] bg-[#222]" />
      <div className="absolute right-[673px] bottom-0 h-[4px] w-[7px] bg-[#141c66]" />
      <RemoteWindow
        size="lg"
        title="VIDEOCONTROL - ScreenConnect"
        className="mt-px mb-[6px] ml-[2px] flex-1"
        files={leftFiles}
        monitor={leftMonitor}
        headline="Console has 150% Display Scaling"
        subline="Everything is bloated"
        captionPad="pr-2"
      />
      <div className={"w-1 shrink-0 " + ticks} />
      <RemoteWindow
        size="sm"
        title="RYAN-DESKTOP - ScreenConnect"
        className="mt-[2px] mr-1 mb-[5px] flex-1"
        files={rightFiles}
        monitor={rightMonitor}
        headline="Console has 100% Display Scaling"
        subline="Everything is normal size"
        captionPad="pl-[44px]"
      />
    </div>
  );
}
